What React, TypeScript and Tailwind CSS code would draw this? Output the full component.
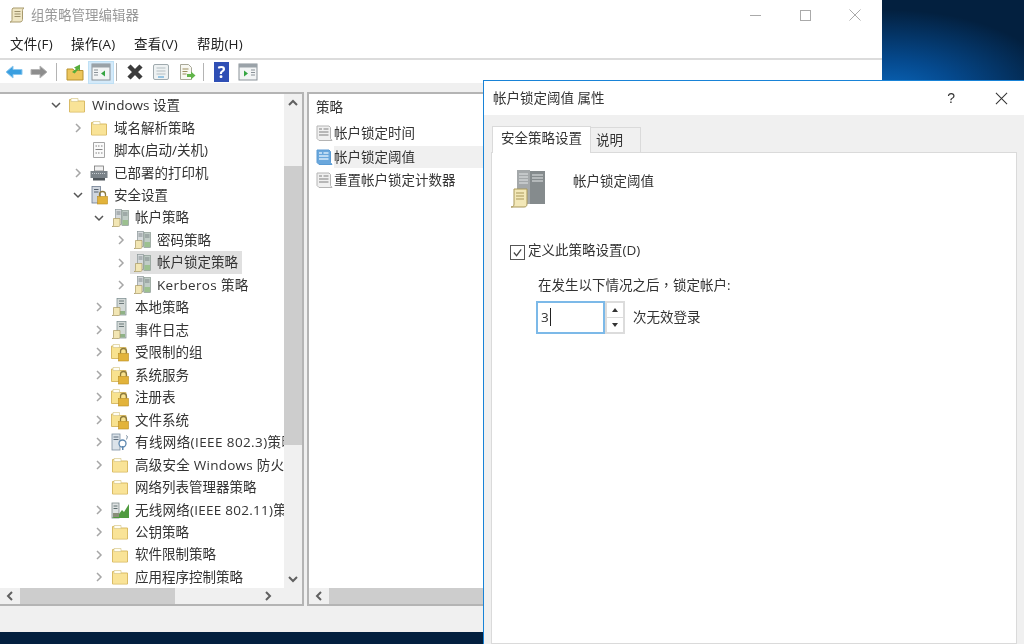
import type { ReactNode } from "react"

// small hand drawn mmc icons
const Folder = () => (
  <svg viewBox="0 0 20 20" className="h-5 w-5">
    <path d="M2.500 4.500h5l1.500 1.500h8.500v11h-15z" fill="#f8e28f" stroke="#d9bb66" />
    <path d="M4 3.500h7v3h-7z" fill="#fffdf2" stroke="#d9c98e" strokeWidth="0.7" />
    <path d="M3 7h14v9.500h-14z" fill="#f9e397" />
  </svg>
)

const Lock = () => (
  <>
    <path d="M10.500 11.500v-2a3 3 0 0 1 6 0v2" fill="none" stroke="#8d7a3c" strokeWidth="1.300" />
    <rect x="8.500" y="11.500" width="10" height="7.500" fill="#e2b33b" stroke="#b98c22" strokeWidth="0.6" />
  </>
)

const FolderLock = () => (
  <svg viewBox="0 0 20 20" className="h-5 w-5">
    <path d="M1.500 4h5l1.500 1.500h8v11h-14.500z" fill="#f8e28f" stroke="#d9bb66" />
    <path d="M3 2.500h6.500v3h-6.500z" fill="#fffdf2" stroke="#d9c98e" strokeWidth="0.7" />
    <Lock />
  </svg>
)

const Towers = () => (
  <>
    <rect x="5.500" y="1.500" width="6" height="15" fill="#d6dadc" stroke="#8b9698" strokeWidth="0.7" />
    <rect x="12" y="2.500" width="6.500" height="15" fill="#c0ccc6" stroke="#8b9b92" strokeWidth="0.7" />
    <path d="M6.500 4h4M6.500 6h4M13 5h4.500M13 7h4.500" stroke="#6c7779" strokeWidth="0.8" />
    <rect x="12.500" y="12" width="5.500" height="5" fill="#9cc08f" />
  </>
)

const Scroll = () => (
  <path d="M3.500 10.500h6.500v6.500c0 1-.6 1.500-1.500 1.500h-6.500c1 0 1.500-.6 1.500-1.500z" fill="#f2e6b4" stroke="#a99a63" strokeWidth="0.7" />
)

const PolicyGroup = () => (
  <svg viewBox="0 0 20 20" className="h-5 w-5">
    <Towers />
    <Scroll />
  </svg>
)

const SinglePolicy = () => (
  <svg viewBox="0 0 20 20" className="h-5 w-5">
    <rect x="7" y="1.500" width="9" height="16.500" fill="#d4dad8" stroke="#76888a" strokeWidth="0.7" />
    <path d="M9 4h5M9 6.500h5" stroke="#5f6d6f" strokeWidth="0.9" />
    <rect x="8" y="14" width="7" height="3.500" fill="#8fb287" />
    <Scroll />
  </svg>
)

const SecurityIcon = () => (
  <svg viewBox="0 0 20 20" className="h-5 w-5">
    <rect x="3" y="1.500" width="8.500" height="16.500" fill="#d0d6de" stroke="#6d7c90" strokeWidth="0.8" />
    <path d="M5 4.500h4.500M5 7h4.500" stroke="#54606e" strokeWidth="1" />
    <Lock />
  </svg>
)

const ScriptIcon = () => (
  <svg viewBox="0 0 20 20" className="h-5 w-5">
    <path d="M4.500 2.500h11v15h-11z" fill="#fafafa" stroke="#a5a5a5" />
    <path d="M6.500 6h1.500M9 6h1.500M12 6h1.500M6.500 13h1.500M9 13h1.500M12 13h1.500M6.500 9.500h7" stroke="#777" strokeWidth="0.9" />
  </svg>
)

const Printer = () => (
  <svg viewBox="0 0 20 20" className="h-5 w-5">
    <rect x="5.500" y="3" width="9" height="5" fill="#f2f2f2" stroke="#777" strokeWidth="0.8" />
    <rect x="1.500" y="8" width="17" height="7" fill="#7a8288" />
    <path d="M3 10.500h14" stroke="#c8ced2" strokeWidth="1" strokeDasharray="1 1" />
    <rect x="4" y="15" width="12" height="2.500" fill="#4c5358" />
  </svg>
)

const WiredIcon = () => (
  <svg viewBox="0 0 20 20" className="h-5 w-5">
    <rect x="2" y="2" width="8" height="16" fill="#dbe3ea" stroke="#7d8fa0" strokeWidth="0.8" />
    <path d="M3.500 5h5M3.500 7.500h5" stroke="#5d6d7c" />
    <rect x="9" y="8" width="7" height="7" rx="3.500" fill="#fff" stroke="#5e88b0" strokeWidth="1.300" />
    <path d="M16 3.500l1.500 1-1 3" fill="none" stroke="#7d8fa0" />
    <rect x="12" y="14" width="1.500" height="4" fill="#5e88b0" />
  </svg>
)

const WirelessIcon = () => (
  <svg viewBox="0 0 20 20" className="h-5 w-5">
    <rect x="2" y="3" width="7" height="15" fill="#dfe3e3" stroke="#7d8a8c" strokeWidth="0.8" />
    <path d="M3.500 6h4M3.500 8.500h4" stroke="#5d6d6f" />
    <path d="M2 18l7-4 3-4 2 2 5-8v14z" fill="#4f9a3e" />
    <path d="M3 13h6v4h-6z" fill="#8a8f7a" />
  </svg>
)

const PolicyDoc = ({ active = false }: { active?: boolean }) => (
  <svg viewBox="0 0 18 18" className="h-[18px] w-[18px]">
    <path
      d="M1 2h12l1.500 1.500v11l1.500 2h-13l-2-2z"
      fill={active ? "#6aa7dc" : "#f0f0f0"}
      stroke={active ? "#5a9bd4" : "#b4b4b4"}
    />
    <path
      d="M3 5h3M7.500 5h5M3 8h9.500M3 11h9.500"
      stroke={active ? "#d8ebfa" : "#a4a4a4"}
      strokeWidth="1.300"
    />
  </svg>
)

const Chevron = ({ open }: { open?: boolean }) => (
  <svg viewBox="0 0 12 12" className="h-3 w-3" fill="none" strokeWidth="1.500">
    {open ? (
      <path d="M2 4l4 4 4-4" stroke="#555" />
    ) : (
      <path d="M4 2l4 4-4 4" stroke="#a6a6a6" />
    )}
  </svg>
)

const Arrow = ({ dir }: { dir: "up" | "down" | "left" | "right" }) => {
  const d = {
    up: "M2 8l4-4 4 4",
    down: "M2 4l4 4 4-4",
    left: "M8 2l-4 4 4 4",
    right: "M4 2l4 4-4 4",
  }[dir]
  return (
    <svg viewBox="0 0 12 12" className="h-3 w-3" fill="none" stroke="#606060" strokeWidth="2">
      <path d={d} />
    </svg>
  )
}

type TreeItem = {
  label: string
  pad: string
  icon: ReactNode
  chevron?: "open" | "closed"
  selected?: boolean
  tracking?: string
}

const treeItems: TreeItem[] = [
  { label: "Windows 设置", pad: "pl-[49px]", icon: <Folder />, chevron: "open" },
  { label: "域名解析策略", pad: "pl-[71px]", icon: <Folder />, chevron: "closed" },
  { label: "脚本(启动/关机)", pad: "pl-[71px]", icon: <ScriptIcon /> },
  { label: "已部署的打印机", pad: "pl-[71px]", icon: <Printer />, chevron: "closed" },
  { label: "安全设置", pad: "pl-[71px]", icon: <SecurityIcon />, chevron: "open" },
  { label: "帐户策略", pad: "pl-[92px]", icon: <PolicyGroup />, chevron: "open" },
  { label: "密码策略", pad: "pl-[114px]", icon: <PolicyGroup />, chevron: "closed" },
  { label: "帐户锁定策略", pad: "pl-[114px]", icon: <PolicyGroup />, chevron: "closed", selected: true },
  { label: "Kerberos 策略", pad: "pl-[114px]", icon: <PolicyGroup />, chevron: "closed", tracking: "tracking-[0.35px]" },
  { label: "本地策略", pad: "pl-[92px]", icon: <SinglePolicy />, chevron: "closed" },
  { label: "事件日志", pad: "pl-[92px]", icon: <SinglePolicy />, chevron: "closed" },
  { label: "受限制的组", pad: "pl-[92px]", icon: <FolderLock />, chevron: "closed" },
  { label: "系统服务", pad: "pl-[92px]", icon: <FolderLock />, chevron: "closed" },
  { label: "注册表", pad: "pl-[92px]", icon: <FolderLock />, chevron: "closed" },
  { label: "文件系统", pad: "pl-[92px]", icon: <FolderLock />, chevron: "closed" },
  { label: "有线网络(IEEE 802.3)策略", pad: "pl-[92px]", icon: <WiredIcon />, chevron: "closed", tracking: "tracking-[0.4px]" },
  { label: "高级安全 Windows 防火墙", pad: "pl-[92px]", icon: <Folder />, chevron: "closed", tracking: "tracking-[0.25px]" },
  { label: "网络列表管理器策略", pad: "pl-[92px]", icon: <Folder /> },
  { label: "无线网络(IEEE 802.11)策略", pad: "pl-[92px]", icon: <WirelessIcon />, chevron: "closed", tracking: "tracking-[0.25px]" },
  { label: "公钥策略", pad: "pl-[92px]", icon: <Folder />, chevron: "closed" },
  { label: "软件限制策略", pad: "pl-[92px]", icon: <Folder />, chevron: "closed" },
  { label: "应用程序控制策略", pad: "pl-[92px]", icon: <Folder />, chevron: "closed" },
]

const menus = [
  { label: "文件(F)", width: "w-[61px]" },
  { label: "操作(A)", width: "w-[63px]" },
  { label: "查看(V)", width: "w-[63px]" },
  { label: "帮助(H)", width: "w-[63px]" },
]

const policies = [
  { label: "帐户锁定时间" },
  { label: "帐户锁定阈值", active: true },
  { label: "重置帐户锁定计数器" },
]

function TreeRow({ item }: { item: TreeItem }) {
  return (
    <div className={`flex h-[22.47px] items-center whitespace-nowrap ${item.pad}`}>
      <span className="flex w-[14px] shrink-0 justify-center">
        {item.chevron && <Chevron open={item.chevron === "open"} />}
      </span>
      <span
        className={`ml-[2px] flex h-full items-center gap-[5px] pl-[2px] pr-[4px] ${
          item.selected ? "bg-[#e0e0e0]" : ""
        }`}
      >
        <span className="shrink-0">{item.icon}</span>
        <span className={item.tracking}>{item.label}</span>
      </span>
    </div>
  )
}

function Toolbar() {
  return (
    <div className="flex h-[25px] items-center border-t-2 border-[#dcdcdc] pl-[5px] pt-[1px]">
      <svg viewBox="0 0 18 18" className="h-[18px] w-[18px]">
        <path d="M1 9l7-6v3.500h9v5h-9v3.500z" fill="#3a9fe0" stroke="#8cc8ef" />
      </svg>
      <svg viewBox="0 0 18 18" className="ml-[7px] h-[18px] w-[18px]">
        <path d="M17 9l-7-6v3.500h-9v5h9v3.500z" fill="#8d8d8d" stroke="#b5b5b5" />
      </svg>
      <span className="ml-[8px] h-[18px] w-[1px] bg-[#b4b4b4]" />
      <svg viewBox="0 0 18 18" className="ml-[9px] h-[18px] w-[18px]">
        <path d="M1 6h6l1 1.500h9v9.500h-16z" fill="#edc65c" stroke="#b8922f" />
        <path d="M6 9l4-3-2-1.500 6-3v6.500l-1.800-1.500-3.500 4z" fill="#56ad3c" />
      </svg>
      <span className="ml-[4px] flex h-[23px] w-[26px] items-center justify-center border border-[#bfe0f5] bg-[#d4eafa]">
        <svg viewBox="0 0 20 18" className="h-[18px] w-5">
          <rect x="1" y="1" width="18" height="16" fill="#f2f4f5" stroke="#8a9298" />
          <rect x="1" y="1" width="18" height="3.500" fill="#9aa2a8" />
          <path d="M3 7h4M3 9.500h4M3 12h4" stroke="#8a9298" />
          <path d="M14 7.500v6l-4-3z" fill="#35a542" />
        </svg>
      </span>
      <span className="ml-[2px] h-[18px] w-[1px] bg-[#b4b4b4]" />
      <svg viewBox="0 0 18 18" className="ml-[9px] h-[18px] w-[18px]">
        <path d="M3 3l12 12M15 3l-12 12" stroke="#3c3c3c" strokeWidth="4.500" />
      </svg>
      <svg viewBox="0 0 18 18" className="ml-[8px] h-[18px] w-[18px]">
        <rect x="1.500" y="1.500" width="15" height="15" rx="1.500" fill="#eef2f3" stroke="#a0aaae" />
        <path d="M4.500 5h9M4.500 8h9M4.500 11h9" stroke="#b4bec2" />
        <path d="M6 14h6" stroke="#7ab6de" strokeWidth="1.500" />
      </svg>
      <svg viewBox="0 0 18 18" className="ml-[8px] h-[18px] w-[18px]">
        <path d="M2.500 1.500h8l3 3v12h-11z" fill="#f8f8f2" stroke="#a8a898" />
        <path d="M4.500 6h6M4.500 8.500h5M4.500 11h4" stroke="#9a8d5c" />
        <path d="M9 11h4v-2.500l4.500 4-4.500 4v-2.500h-4z" fill="#62b54a" />
      </svg>
      <span className="ml-[7px] h-[18px] w-[1px] bg-[#b4b4b4]" />
      <span className="ml-[10px] flex h-[20px] w-[15px] items-center justify-center bg-[#2f4fb5] text-[16px] font-bold leading-none text-white">
        ?
      </span>
      <svg viewBox="0 0 20 18" className="ml-[9px] h-[18px] w-5">
        <rect x="1" y="1" width="18" height="16" fill="#f2f4f5" stroke="#8a9298" />
        <rect x="1" y="1" width="18" height="3.500" fill="#9aa2a8" />
        <path d="M13 7h4M13 9.500h4M13 12h4" stroke="#8a9298" />
        <path d="M6 7.500v6l4-3z" fill="#35a542" />
      </svg>
    </div>
  )
}

function LeftPane() {
  return (
    <div className="flex h-full w-[304px] shrink-0 flex-col border-2 border-l-0 border-[#b4b4b4] bg-white">
      <div className="flex min-h-0 flex-1">
        <div className="w-[284px] shrink-0 overflow-hidden">
          {treeItems.map((item) => (
            <TreeRow key={item.label} item={item} />
          ))}
        </div>
        <div className="flex flex-1 flex-col bg-[#f0f0f0]">
          <span className="flex h-[18px] items-center justify-center">
            <Arrow dir="up" />
          </span>
          <span className="mt-[54px] h-[279px] bg-[#cdcdcd]" />
          <span className="flex-1" />
          <span className="flex h-[18px] items-center justify-center">
            <Arrow dir="down" />
          </span>
        </div>
      </div>
      <div className="flex h-[16px] items-center bg-[#f0f0f0]">
        <span className="flex w-[20px] justify-center">
          <Arrow dir="left" />
        </span>
        <span className="h-full w-[155px] bg-[#cdcdcd]" />
        <span className="flex-1" />
        <span className="mr-[24px] flex w-[20px] justify-center">
          <Arrow dir="right" />
        </span>
      </div>
    </div>
  )
}

function RightPane() {
  return (
    <div className="ml-[3px] flex h-full flex-1 flex-col border-2 border-r-0 border-[#b4b4b4] bg-white">
      <div className="flex-1 overflow-hidden pl-[7px]">
        <div className="flex h-[26px] items-center">策略</div>
        <div className="mt-[2px] flex flex-col gap-[1px]">
          {policies.map((p) => (
            <div key={p.label} className="flex h-[22.600px] items-center">
              <PolicyDoc active={p.active} />
              <span
                className={`flex h-full flex-1 items-center ${
                  p.active ? "bg-[#f0f0f0]" : ""
                }`}
              >
                {p.label}
              </span>
            </div>
          ))}
        </div>
      </div>
      <div className="flex h-[16px] items-center bg-[#f0f0f0]">
        <span className="flex w-[20px] justify-center">
          <Arrow dir="left" />
        </span>
        <span className="h-full w-[155px] bg-[#cdcdcd]" />
      </div>
    </div>
  )
}

function PropertiesDialog() {
  return (
    <div className="absolute left-[483px] top-[80px] flex h-[564px] w-[541px] flex-col border-l border-t border-[#1883d7] bg-[#f0f0f0]">
      <div className="flex h-[34px] shrink-0 items-center bg-white pl-[9px]">
        <span>帐户锁定阈值 属性</span>
        <span className="ml-auto mr-[40px] font-['Liberation_Sans',sans-serif] text-[14px]">?</span>
        <svg viewBox="0 0 14 14" className="mr-[16px] h-[13px] w-[13px]" stroke="#333" strokeWidth="1.100">
          <path d="M1 1l12 12M13 1l-12 12" />
        </svg>
      </div>
      <div className="flex h-[37px] shrink-0 items-end pl-[8px] pr-[7px]">
        <div className="z-10 -mb-[1px] flex h-[27px] w-[99px] items-center justify-center border border-b-0 border-[#dadada] bg-white pb-[3px]">
          安全策略设置
        </div>
        <div className="flex h-[25px] w-[50px] items-center border border-b-0 border-l-0 border-[#dadada] bg-[#f0f0f0] pl-[5px]">
          说明
        </div>
      </div>
      <div className="ml-[7px] mr-[7px] flex-1 border border-[#dadada] bg-white pl-[18px]">
        <div className="flex h-[74px] pt-[16px]">
          <svg viewBox="0 0 36 40" className="h-[40px] w-[36px]">
            <rect x="7" y="1" width="13" height="34" fill="#a4a8aa" />
            <rect x="20" y="2" width="15" height="33" fill="#858b8d" />
            <path d="M9 5h9M9 8h9M9 11h9M9 14h9M22 6h11M22 9h11M22 12h11" stroke="#e3e6e7" />
            <path d="M4 20h13v15c0 2-1 3-3 3h-13c2 0 3-1 3-3z" fill="#f3e8b8" stroke="#a9985a" />
            <path d="M6 24h8M6 27h8M6 30h8" stroke="#a9985a" />
          </svg>
          <span className="ml-[27px] mt-[2px]">帐户锁定阈值</span>
        </div>
        <label className="mt-[13px] flex items-center gap-[3px]">
          <span className="mt-[4px] flex h-[15px] w-[15px] items-center justify-center border border-[#555] bg-white">
            <svg viewBox="0 0 12 12" className="h-[11px] w-[11px]" fill="none" stroke="#444" strokeWidth="1.300">
              <path d="M2 6l3 3.500 5-7" />
            </svg>
          </span>
          定义此策略设置(D)
        </label>
        <div className="ml-[28px] mt-[14px]">
          在发生以下情况之后<span className="font-['Noto_Sans_CJK_TC']">，</span>锁定帐户:
        </div>
        <div className="ml-[26px] mt-[5px] flex items-center">
          <div className="flex h-[33px] w-[69px] items-center border-2 border-[#7cb9e8] pl-[3px]">
            <span>3</span>
            <span className="ml-[1px] h-[18px] w-[1px] bg-[#222]" />
          </div>
          <div className="flex h-[33px] w-[20px] flex-col gap-[1px] bg-[#dcdcdc] p-[2px]">
            <span className="flex flex-1 items-center justify-center bg-white">
              <span className="h-0 w-0 border-x-[3px] border-b-[4px] border-x-transparent border-b-[#333]" />
            </span>
            <span className="flex flex-1 items-center justify-center bg-white">
              <span className="h-0 w-0 border-x-[3px] border-t-[4px] border-x-transparent border-t-[#333]" />
            </span>
          </div>
          <span className="ml-[8px]">次无效登录</span>
        </div>
      </div>
    </div>
  )
}

export default function App() {
  return (
    <div className="relative h-[644px] w-[1024px] overflow-hidden bg-[#021b38] bg-[radial-gradient(ellipse_170px_85px_at_890px_95px,#0a68bd_0%,#054a8f_40%,#03203f_100%)] font-['Open_Sans','Noto_Sans_CJK_SC',sans-serif] text-[13.500px] text-[#333] blur-[0.5px]">
      <div className="flex h-[632px] w-[882px] flex-col bg-[#f0f0f0]">
        {/* title bar */}
        <div className="flex h-[30px] shrink-0 items-center bg-white pl-[8px] text-[#999]">
          <svg viewBox="0 0 18 18" className="h-[18px] w-[18px]">
            <path d="M5 2h11c-1 .5-1.500 1.500-1.500 2.500v9c0 1.500-1 2.500-2.500 2.500h-10c1.200 0 2-1 2-2.500v-9c0-1 .2-2 1-2.500z" fill="#efe6c4" stroke="#a89a6d" />
            <path d="M6.500 5.500h6M6.500 8h6M6.500 10.500h6" stroke="#9b8f6a" />
          </svg>
          <span className="ml-[5px]">组策略管理编辑器</span>
          <div className="ml-auto flex items-center">
            <span className="flex w-[50px] justify-center">
              <span className="h-[1px] w-[11px] bg-[#aaa]" />
            </span>
            <span className="flex w-[50px] justify-center">
              <span className="h-[11px] w-[11px] border border-[#aaa]" />
            </span>
            <span className="flex w-[50px] justify-center">
              <svg viewBox="0 0 12 12" className="h-3 w-3" stroke="#aaa">
                <path d="M.5.500l11 11M11.500.500l-11 11" />
              </svg>
            </span>
            <span className="w-[2px]" />
          </div>
        </div>
        {/* menu bar */}
        <div className="flex h-[28px] shrink-0 items-center bg-white pl-[10px] pt-[1px] text-[#222]">
          {menus.map((m) => (
            <span key={m.label} className={`${m.width} tracking-[0.2px]`}>
              {m.label}
            </span>
          ))}
        </div>
        <div className="shrink-0 bg-white">
          <Toolbar />
        </div>
        <div className="h-[9px] shrink-0" />
        <div className="flex h-[514px] shrink-0">
          <LeftPane />
          <RightPane />
        </div>
      </div>
      <PropertiesDialog />
    </div>
  )
}
